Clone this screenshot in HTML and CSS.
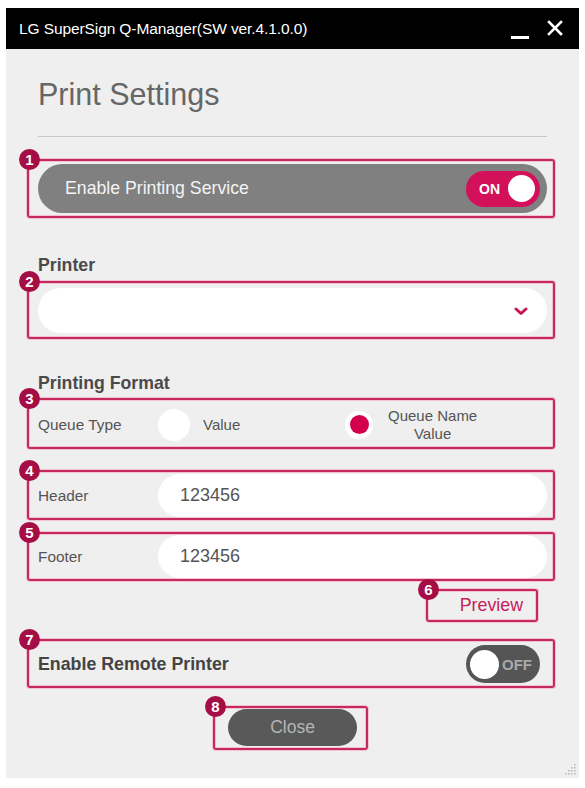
FILE: index.html
```html
<!DOCTYPE html>
<html lang="en">
<head>
<meta charset="utf-8">
<title>Print Settings</title>
<link rel="stylesheet" href="styles.css">
</head>
<body>
<div class="window">
  <div class="titlebar">
    <span class="title">LG SuperSign Q-Manager(SW ver.4.1.0.0)</span>
    <div class="controls">
      <span class="minimize"></span>
      <svg class="close-x" width="16" height="16" viewBox="0 0 16 16"><path d="M2 2 L14 14 M14 2 L2 14" stroke="#fff" stroke-width="2.6" stroke-linecap="square"/></svg>
    </div>
  </div>
  <div class="content">
    <h1 class="heading">Print Settings</h1>
    <div class="rule"></div>

    <div class="callout c1">
      <span class="badge">1</span>
      <div class="service-bar">
        <span class="service-label">Enable Printing Service</span>
        <span class="toggle on"><span class="toggle-text">ON</span><span class="knob"></span></span>
      </div>
    </div>

    <div class="section-label printer-label">Printer</div>
    <div class="callout c2">
      <span class="badge">2</span>
      <div class="select">
        <svg class="chevron" width="14" height="9" viewBox="0 0 14 9"><path d="M2 2 L7 6.5 L12 2" fill="none" stroke="#c8174f" stroke-width="3" stroke-linecap="round" stroke-linejoin="round"/></svg>
      </div>
    </div>

    <div class="section-label format-label">Printing Format</div>
    <div class="callout c3">
      <span class="badge">3</span>
      <div class="queue-row">
        <span class="field-label">Queue Type</span>
        <span class="radio"></span>
        <span class="radio-text">Value</span>
        <span class="radio checked"><span class="dot"></span></span>
        <span class="radio-text two-line">Queue Name<br>Value</span>
      </div>
    </div>

    <div class="callout c4">
      <span class="badge">4</span>
      <div class="input-row">
        <span class="field-label">Header</span>
        <div class="input">123456</div>
      </div>
    </div>

    <div class="callout c5">
      <span class="badge">5</span>
      <div class="input-row">
        <span class="field-label">Footer</span>
        <div class="input">123456</div>
      </div>
    </div>

    <div class="preview-wrap">
      <div class="callout preview">
        <span class="badge">6</span>
        <span class="preview-text">Preview</span>
      </div>
    </div>

    <div class="callout c7">
      <span class="badge">7</span>
      <div class="remote-row">
        <span class="remote-label">Enable Remote Printer</span>
        <span class="toggle off"><span class="knob"></span><span class="toggle-text">OFF</span></span>
      </div>
    </div>

    <div class="close-wrap">
      <div class="callout c8">
        <span class="badge">8</span>
        <div class="close-btn">Close</div>
      </div>
    </div>
  </div>
  <svg class="grip" width="14" height="14" viewBox="0 0 14 14">
    <g fill="#b8b8b8">
      <rect x="11" y="2" width="1.5" height="1.5"/>
      <rect x="8" y="5" width="1.5" height="1.5"/><rect x="11" y="5" width="1.5" height="1.5"/>
      <rect x="5" y="8" width="1.5" height="1.5"/><rect x="8" y="8" width="1.5" height="1.5"/><rect x="11" y="8" width="1.5" height="1.5"/>
      <rect x="2" y="11" width="1.5" height="1.5"/><rect x="5" y="11" width="1.5" height="1.5"/><rect x="8" y="11" width="1.5" height="1.5"/><rect x="11" y="11" width="1.5" height="1.5"/>
    </g>
  </svg>
</div>
</body>
</html>
```

FILE: styles.css
```css
* { box-sizing: border-box; }

body {
  margin: 0;
  background: #ffffff;
  font-family: "Liberation Sans", Arial, sans-serif;
}

.window {
  position: relative;
  margin: 8px 0 0 6px;
  width: 573px;
  height: 770px;
  background: #efefef;
  display: flex;
  flex-direction: column;
}

.titlebar {
  height: 41px;
  background: #000;
  display: flex;
  align-items: center;
  justify-content: space-between;
  padding: 0 16px 0 13px;
}

.title {
  color: #fff;
  font-size: 15.5px;
  letter-spacing: -0.1px;
}

.controls {
  display: flex;
  align-items: center;
  gap: 18px;
}

.minimize {
  display: block;
  width: 18px;
  height: 2.5px;
  background: #fff;
  margin-top: 18px;
}

.close-x { display: block; margin-top: -2px; }

.content {
  padding: 0 32px;
  display: flex;
  flex-direction: column;
}

.heading {
  margin: 27px 0 0;
  font-size: 30.5px;
  line-height: 36px;
  font-weight: normal;
  color: #666;
}

.rule {
  margin-top: 24px;
  height: 1px;
  background: #c6c6c6;
}

.callout {
  position: relative;
  margin-left: -11px;
  margin-right: -8px;
  padding: 0 6px 0 9px;
  border: 2px solid #c62a5c;
  border-radius: 3px;
  box-shadow: 0 0 0 1px #f1c3d2, inset 0 0 0 1px #f1c3d2;
}

.badge {
  position: absolute;
  left: -10px;
  top: -12px;
  width: 21px;
  height: 21px;
  border-radius: 50%;
  background: #a50d45;
  color: #fff;
  font-weight: bold;
  font-size: 15px;
  line-height: 21px;
  text-align: center;
  z-index: 2;
}

.c1 { margin-top: 22px; padding-top: 3px; padding-bottom: 3px; }

.service-bar {
  height: 49px;
  border-radius: 25px;
  background: #808080;
  display: flex;
  align-items: center;
  justify-content: space-between;
  padding: 0 7px 0 27px;
}

.service-label {
  color: #f4f4f4;
  font-size: 17.7px;
}

.toggle {
  width: 74px;
  height: 36px;
  border-radius: 18px;
  display: flex;
  align-items: center;
}

.toggle.on {
  background: #d3115a;
  justify-content: space-between;
  padding: 0 5px 0 13px;
  height: 36px;
}

.toggle.off {
  background: #555555;
  height: 38px;
  border-radius: 19px;
  padding: 0 8px 0 4px;
  justify-content: space-between;
}

.toggle-text {
  color: #fff;
  font-weight: bold;
  font-size: 14px;
}

.toggle.off .toggle-text { color: #a9a9a9; font-size: 15px; }

.knob {
  width: 27px;
  height: 27px;
  border-radius: 50%;
  background: #fff;
}

.toggle.off .knob { width: 29px; height: 29px; }

.section-label {
  font-weight: bold;
  font-size: 17.7px;
  line-height: 18px;
  color: #4a4a4a;
}

.printer-label { margin-top: 38px; }

.c2 { margin-top: 7px; padding-top: 5px; padding-bottom: 4px; }

.select {
  height: 45px;
  border-radius: 23px;
  background: #fff;
  display: flex;
  align-items: center;
  justify-content: flex-end;
  padding-right: 19px;
}

.chevron { display: block; margin-top: 1px; }

.format-label { margin-top: 35px; }

.c3 { margin-top: 6px; height: 51px; padding-top: 2px; }

.queue-row {
  height: 45px;
  display: flex;
  align-items: center;
}

.field-label {
  width: 120px;
  flex: none;
  font-size: 15.4px;
  color: #555;
}

.radio {
  width: 32px;
  height: 32px;
  border-radius: 50%;
  background: #fff;
  flex: none;
  display: flex;
  align-items: center;
  justify-content: center;
}

.radio.checked {
  width: 28px;
  height: 28px;
}

.dot {
  width: 19px;
  height: 19px;
  border-radius: 50%;
  background: #d3004f;
}

.radio-text {
  font-size: 15px;
  color: #555;
  margin-left: 13px;
  width: 142px;
}

.radio-text.two-line {
  width: auto;
  margin-left: 15px;
  text-align: center;
  line-height: 18px;
}

.c4 { margin-top: 21px; padding-top: 2px; padding-bottom: 1px; }
.c5 { margin-top: 12px; padding-top: 1px; padding-bottom: 1px; }

.input-row {
  display: flex;
  align-items: center;
}

.input {
  flex: 1;
  height: 43px;
  border-radius: 22px;
  background: #fff;
  padding-left: 22px;
  display: flex;
  align-items: center;
  font-size: 18px;
  color: #555;
}

.preview-wrap {
  display: flex;
  justify-content: flex-end;
  margin-top: 8px;
  padding-right: 9px;
}

.callout.preview {
  margin: 0;
  width: 112px;
  height: 33px;
  padding: 0 13px 0 0;
  display: flex;
  align-items: center;
  justify-content: flex-end;
}

.preview-text {
  color: #c8205a;
  font-size: 17.8px;
}

.c7 { margin-top: 17px; padding-top: 4px; padding-bottom: 3px; }

.remote-row {
  display: flex;
  align-items: center;
  justify-content: space-between;
  padding-right: 7px;
}

.remote-label {
  font-weight: bold;
  font-size: 17.8px;
  color: #444;
}

.close-wrap {
  display: flex;
  margin-top: 18px;
  padding-left: 175px;
}

.callout.c8 {
  margin: 0;
  width: 155px;
  height: 44px;
  padding: 1px 9px 0 13px;
}

.close-btn {
  height: 37px;
  border-radius: 19px;
  background: #595959;
  color: #b4b4b4;
  font-size: 17.5px;
  display: flex;
  align-items: center;
  justify-content: center;
}

.grip {
  position: absolute;
  right: 2px;
  bottom: 2px;
}
```
